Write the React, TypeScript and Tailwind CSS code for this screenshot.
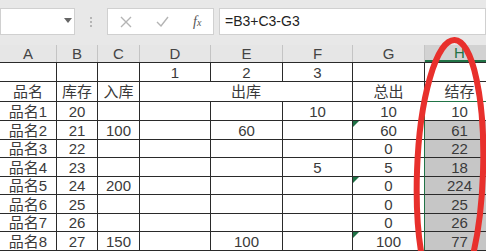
import React from 'react';

const cols = ['A', 'B', 'C', 'D', 'E', 'F', 'G', 'H'];
const widths = 'grid-cols-[57px_41px_42px_71px_72px_70px_72px_70px]';

type Row = {
  name: string;
  stock: string;
  inbound: string;
  d: string;
  e: string;
  f: string;
  out: string;
  left: string;
  mark?: boolean;
};

const rows: Row[] = [
  { name: '品名1', stock: '20', inbound: '', d: '', e: '', f: '10', out: '10', left: '10' },
  { name: '品名2', stock: '21', inbound: '100', d: '', e: '60', f: '', out: '60', left: '61', mark: true },
  { name: '品名3', stock: '22', inbound: '', d: '', e: '', f: '', out: '0', left: '22' },
  { name: '品名4', stock: '23', inbound: '', d: '', e: '', f: '5', out: '5', left: '18' },
  { name: '品名5', stock: '24', inbound: '200', d: '', e: '', f: '', out: '0', left: '224', mark: true },
  { name: '品名6', stock: '25', inbound: '', d: '', e: '', f: '', out: '0', left: '25' },
  { name: '品名7', stock: '26', inbound: '', d: '', e: '', f: '', out: '0', left: '26' },
  { name: '品名8', stock: '27', inbound: '150', d: '', e: '100', f: '', out: '100', left: '77', mark: true },
];

const heights = ['h-[19px]', 'h-[19px]', 'h-[18px]', 'h-[19px]', 'h-[18px]', 'h-[19px]', 'h-[18px]', 'h-[19px]'];

function Cell({ children, className = '' }: { children?: React.ReactNode; className?: string }) {
  return (
    <div className={`flex items-center justify-center border-r border-b border-[#2a2a2a] leading-none ${className}`}>
      {children}
    </div>
  );
}

export default function App() {
  return (
    <div
      className="relative w-[486px] h-[251px] overflow-hidden bg-white text-[#3a3a3a] text-[15px]"
      style={{ fontFamily: '"Liberation Sans", "Noto Sans CJK SC", sans-serif' }}
    >
      {/* formula bar */}
      <div className="flex h-[45px] items-start bg-[#e8e8e8] pt-[8px]">
        <div className="relative h-[27px] w-[75px] border border-[#d0d0d0] bg-white">
          <svg className="absolute left-[63px] top-[9px]" width="8" height="5" viewBox="0 0 8 5">
            <path d="M0 0h8L4 5z" fill="#666" />
          </svg>
        </div>
        <div className="flex h-[27px] w-[32px] flex-col items-center justify-center gap-[2px]">
          <span className="h-[2px] w-[2px] bg-[#b5b5b5]" />
          <span className="h-[2px] w-[2px] bg-[#b5b5b5]" />
          <span className="h-[2px] w-[2px] bg-[#b5b5b5]" />
        </div>
        <div className="flex h-[27px] w-[107px] items-center border border-[#d0d0d0] bg-white">
          <svg className="ml-[12px]" width="12" height="12" viewBox="0 0 12 12">
            <path d="M1 1l10 10M11 1L1 11" stroke="#b4b4b4" strokeWidth="1.4" />
          </svg>
          <svg className="ml-[24px]" width="13" height="11" viewBox="0 0 13 11">
            <path d="M1 6l4 4 7-9" stroke="#b4b4b4" strokeWidth="1.4" fill="none" />
          </svg>
          <span
            className="ml-[24px] italic text-[#555] text-[14px]"
            style={{ fontFamily: '"Liberation Serif", serif' }}
          >
            f<span className="text-[10px]">x</span>
          </span>
        </div>
        <div className="ml-[5px] flex h-[27px] flex-1 items-center border border-[#d0d0d0] bg-white pl-[5px] text-[14px] text-[#222]">
          =B3+C3-G3
        </div>
      </div>

      {/* column headers */}
      <div className={`grid ${widths} h-[18px] border-b border-[#2a2a2a] bg-[#e6e6e6]`}>
        {cols.map(c => (
          <div
            key={c}
            className={`flex items-center justify-center border-r border-[#c4c4c4] leading-none text-[#444] ${
              c === 'H' ? 'bg-[#d2d2d2] text-[#217346] border-b-2 border-b-[#217346]' : ''
            }`}
          >
            {c}
          </div>
        ))}
      </div>

      {/* row 1 */}
      <div className={`grid ${widths} h-[19px]`}>
        <Cell />
        <Cell />
        <Cell />
        <Cell>1</Cell>
        <Cell>2</Cell>
        <Cell>3</Cell>
        <Cell />
        <Cell />
      </div>

      {/* header row */}
      <div className={`grid ${widths} h-[20px]`}>
        <Cell>品名</Cell>
        <Cell>库存</Cell>
        <Cell>入库</Cell>
        <Cell className="col-span-3">出库</Cell>
        <Cell>总出</Cell>
        <Cell className="border-b-[#217346]">结存</Cell>
      </div>

      {/* data */}
      {rows.map((r, i) => (
        <div key={r.name} className={`grid ${widths} ${heights[i]}`}>
          <Cell>{r.name}</Cell>
          <Cell>{r.stock}</Cell>
          <Cell>{r.inbound}</Cell>
          <Cell>{r.d}</Cell>
          <Cell>{r.e}</Cell>
          <Cell>{r.f}</Cell>
          <Cell className="relative border-r-[#217346]">
            {r.mark && (
              <span className="absolute left-0 top-0 h-0 w-0 border-t-[6px] border-r-[6px] border-t-[#1e7145] border-r-transparent" />
            )}
            {r.out}
          </Cell>
          <Cell className={i === 0 ? 'bg-white' : 'bg-[#c6c6c6]'}>{r.left}</Cell>
        </div>
      ))}

      {/* red hand-drawn circle */}
      <svg className="pointer-events-none absolute inset-0" width="486" height="251" viewBox="0 0 486 251">
        <ellipse
          cx="450"
          cy="172"
          rx="33"
          ry="132"
          fill="none"
          stroke="#e8302c"
          strokeWidth="6"
          transform="rotate(2 450 172)"
        />
      </svg>
    </div>
  );
}
